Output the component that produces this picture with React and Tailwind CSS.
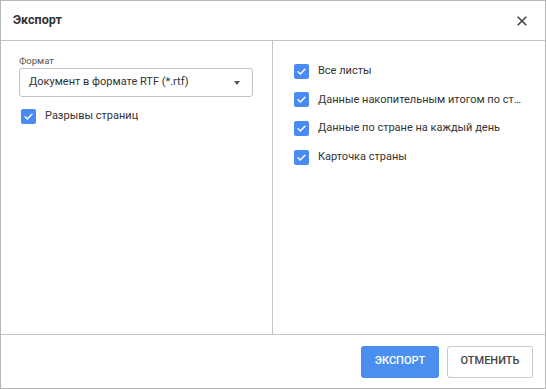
import React from "react";

function Check() {
  return (
    <span className="flex h-[15px] w-[15px] shrink-0 items-center justify-center rounded-[2px] bg-[#4a8af4]">
      <svg width="11" height="11" viewBox="0 0 24 24" fill="none" stroke="#fff" strokeWidth="3.2" strokeLinecap="round" strokeLinejoin="round">
        <path d="M4.5 12.5l5 5L19.5 7" />
      </svg>
    </span>
  );
}

function Row({ children }) {
  return (
    <div className="flex h-[28.6px] items-center gap-[9px]">
      <Check />
      <span className="truncate text-[11px] text-[#333]">{children}</span>
    </div>
  );
}

export default function App() {
  return (
    <div className="flex h-[389px] w-[546px] flex-col border border-[#b7b7b7] bg-white font-['Roboto',sans-serif]">
      <div className="flex h-[40px] shrink-0 items-center justify-between border-b border-[#c4c4c4] pl-[12px] pr-[18px]">
        <span className="text-[12.5px] font-bold text-[#333]">Экспорт</span>
        <svg width="10" height="10" viewBox="0 0 12 12" stroke="#444" strokeWidth="1.9" strokeLinecap="square">
          <path d="M1.5 1.5l9 9M10.5 1.5l-9 9" />
        </svg>
      </div>
      <div className="flex min-h-0 flex-1">
        <div className="w-[272px] shrink-0 border-r border-[#c4c4c4] pl-[18px] pr-[19px] pt-[13px]">
          <div className="text-[9.5px] leading-[14px] text-[#555]">Формат</div>
          <div className="flex h-[29px] items-center justify-between rounded-[3px] border border-[#c2c2c2] pl-[9px] pr-[12px]">
            <span className="text-[11px] text-[#333]">Документ в формате RTF (*.rtf)</span>
            <svg width="6" height="4" viewBox="0 0 6 4">
              <path d="M0 0h6L3 4z" fill="#555" />
            </svg>
          </div>
          <div className="mt-[5px] pl-[2px]">
            <Row>Разрывы страниц</Row>
          </div>
        </div>
        <div className="min-w-0 flex-1 pl-[21px] pr-[20px] pt-[16px]">
          <Row>Все листы</Row>
          <Row>Данные накопительным итогом по стране</Row>
          <Row>Данные по стране на каждый день</Row>
          <Row>Карточка страны</Row>
        </div>
      </div>
      <div className="flex h-[54px] shrink-0 items-center justify-end gap-[8px] border-t border-[#c4c4c4] pr-[12px]">
        <button className="h-[32px] w-[78px] rounded-[3px] bg-[#4a8ff0] text-[11px] font-medium text-white">ЭКСПОРТ</button>
        <button className="h-[32px] w-[86px] rounded-[3px] border border-[#c8c8c8] bg-white text-[11px] font-medium text-[#444]">ОТМЕНИТЬ</button>
      </div>
    </div>
  );
}
